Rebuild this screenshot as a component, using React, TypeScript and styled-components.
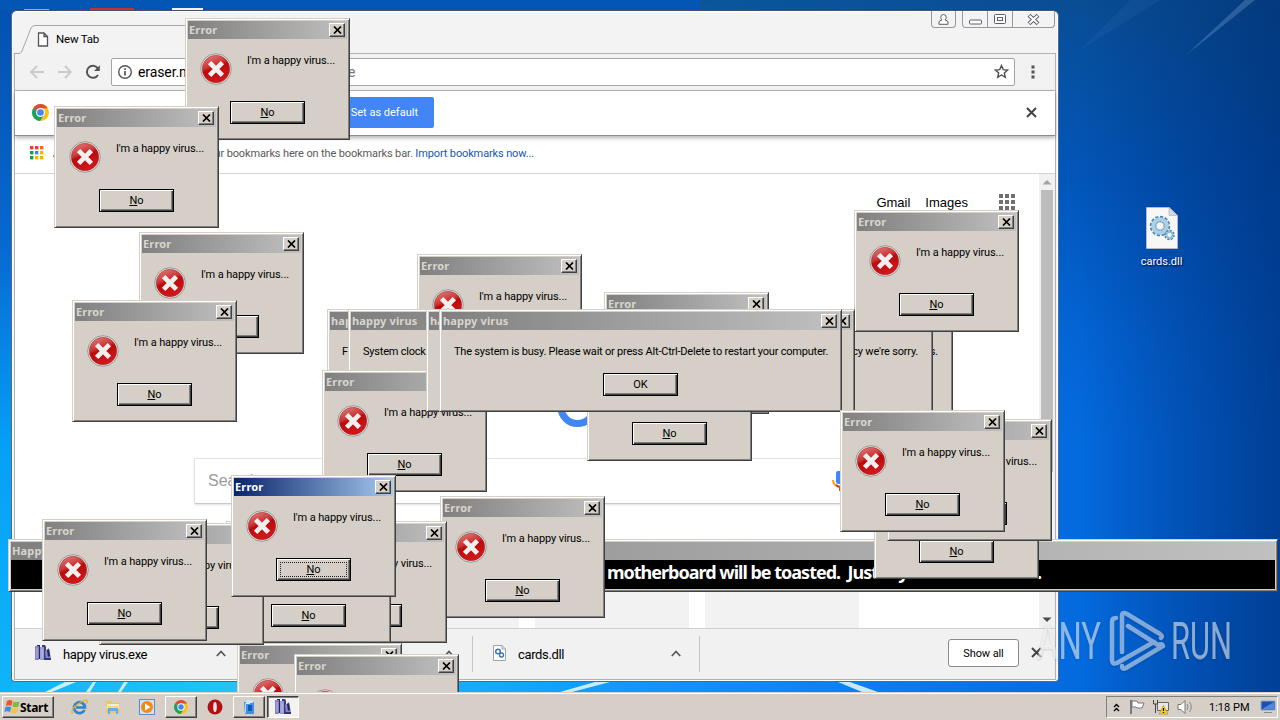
import React from "react";
import styled, { createGlobalStyle, css } from "styled-components";

const ui = `Roboto, "Noto Sans", sans-serif`;
const face = "#d5cfc7";

const Global = createGlobalStyle`
  * { box-sizing: border-box; }
  body { margin: 0; overflow: hidden; font-family: ${ui}; font-size: 11px; color: #000; }
  svg { display: block; flex: none; }
`;

const Desktop = styled.main`
  position: relative;
  width: 1280px;
  height: 720px;
  overflow: hidden;
  display: flex;
  flex-direction: column;
  justify-content: flex-end;
  background:
    linear-gradient(90deg, transparent 1050px, rgba(0, 40, 110, 0) 1080px, rgba(0, 44, 110, 0.55) 1280px),
    linear-gradient(180deg, rgba(10, 70, 130, 0.8) 0, rgba(0, 65, 150, 0.5) 180px, rgba(0, 70, 160, 0.15) 340px, transparent 440px),
    linear-gradient(90deg, #12b4fb 0, #22c6f4 250px, #12a0ff 560px, #0a86f8 800px, #046ce0 1060px, #0058c8 1280px);
`;

const Sky = styled.svg`
  position: absolute;
  left: 0;
  top: 0;
`;

/* ---------- desktop icon ---------- */
const Shortcut = styled.div`
  position: absolute;
  left: 1124px;
  top: 207px;
  width: 75px;
  display: flex;
  flex-direction: column;
  align-items: center;
  gap: 6px;
  color: #fff;
  line-height: 14px;
  text-shadow: 1px 1px 2px #002;
`;

/* ---------- browser ---------- */
const Browser = styled.section`
  position: absolute;
  isolation: isolate;
  left: 11px;
  top: 10px;
  width: 1048px;
  height: 672px;
  padding: 0 2px 1px;
  display: flex;
  flex-direction: column;
  border: 1px solid #4b6a94;
  border-top-color: #45516b;
  border-radius: 6px 6px 4px 4px;
  background: #f3f3f3;
  box-shadow: inset 0 0 0 1px #fff;
`;
const TabStrip = styled.div`
  height: 42px;
  flex: none;
  display: flex;
  justify-content: space-between;
  position: relative;
`;
const TabLabel = styled.div`
  display: flex;
  align-items: center;
  gap: 7px;
  height: 30px;
  margin: 13px 0 0 23px;
  font-size: 11.5px;
  letter-spacing: -0.2px;
  z-index: 1;
`;
const TabShape = styled.svg`
  position: absolute;
  left: 0;
  top: 14px;
`;
const Caption = styled.div`
  display: flex;
  margin-right: 1px;
  height: 17px;
`;
const CapBtn = styled.div<{ $w: number; $first?: boolean; $last?: boolean; $gap?: number }>`
  width: ${(p) => p.$w}px;
  margin-right: ${(p) => p.$gap ?? 0}px;
  display: flex;
  align-items: center;
  justify-content: center;
  border: 1px solid #999;
  border-top: 0;
  border-left-width: ${(p) => (p.$first ? 1 : 0)}px;
  border-radius: 0 0 ${(p) => (p.$last ? 4 : 0)}px ${(p) => (p.$first ? 4 : 0)}px;
`;
const Inner = styled.div`
  flex: 1;
  display: flex;
  flex-direction: column;
  min-height: 0;
  border: 1px solid #b2b2b2;
  border-top: 0;
`;
const Toolbar = styled.div`
  height: 38px;
  flex: none;
  padding: 0 12px 0 14px;
  display: flex;
  align-items: center;
  border-bottom: 1px solid #b4b4b4;
  background: #f2f2f2;
`;
const NavIcons = styled.div`
  display: flex;
  gap: 12px;
  width: 82px;
`;
const Omnibox = styled.div`
  flex: 1;
  height: 28px;
  display: flex;
  align-items: center;
  padding: 0 5px;
  border: 1px solid #a4a4a4;
  border-radius: 2px;
  background: #fff;
  font-size: 14px;
`;
const Url = styled.div`
  width: 210px;
  margin-left: 5px;
  letter-spacing: -0.1px;
`;
const UrlTail = styled.div`
  flex: 1;
  color: #777;
`;
const Dots = styled.svg`
  margin-left: 8px;
`;
const InfoBar = styled.div`
  height: 45px;
  flex: none;
  display: flex;
  align-items: center;
  padding: 0 18px 2px 17px;
  border-bottom: 1px solid #8c8c8c;
  background: #fff;
  box-shadow: 0 2px 4px rgba(0, 0, 0, 0.3);
  z-index: 1;
`;
const DefaultBtn = styled.div`
  width: 140px;
  height: 31px;
  margin-left: 245px;
  margin-right: auto;
  padding-right: 16px;
  display: flex;
  align-items: center;
  justify-content: flex-end;
  border-radius: 2px;
  background: #4285f4;
  color: #fff;
`;
const Bookmarks = styled.div`
  height: 38px;
  flex: none;
  display: flex;
  align-items: center;
  padding: 0 0 3px 15px;
  border-bottom: 1px solid #d4d4d4;
  background: #fff;
  color: #5a5a5a;
  letter-spacing: -0.13px;
  white-space: pre;
`;
const AppsLabel = styled.span`
  color: #111;
  width: 37px;
  margin-left: 9px;
`;
const Import = styled.span`
  color: #1558b0;
`;
const Page = styled.div`
  flex: 1;
  min-height: 0;
  display: flex;
  background: #fff;
`;
const PageBody = styled.div`
  flex: 1;
  display: flex;
  flex-direction: column;
  align-items: center;
  overflow: hidden;
  > * { flex: none; }
`;
const TopLinks = styled.div`
  align-self: stretch;
  display: flex;
  justify-content: flex-end;
  align-items: center;
  gap: 15px;
  height: 56px;
  padding-right: 24px;
  font: 13px "Liberation Sans", Arial, sans-serif;
`;
const AppsGrid = styled.svg`
  margin-left: 16px;
`;
const Doodle = styled.svg`
  margin: 160px 0 0 100px;
`;
const Search = styled.div`
  width: 664px;
  height: 46px;
  margin: 24px 2px 0 0;
  display: flex;
  align-items: center;
  justify-content: space-between;
  padding: 0 9px 0 13px;
  border: 1px solid #e2e2e2;
  border-bottom-color: #c8c8c8;
  border-radius: 2px;
  box-shadow: 0 1px 2px rgba(0, 0, 0, 0.12);
  font: 16px "Liberation Sans", Arial, sans-serif;
  color: #9a9a9a;
`;
const Tiles = styled.div`
  display: flex;
  gap: 16px;
  margin-top: 60px;
`;
const Tile = styled.div`
  width: 154px;
  height: 130px;
  background: #f2f2f2;
`;
const Scroll = styled.div`
  width: 16px;
  display: flex;
  flex-direction: column;
  align-items: center;
  justify-content: space-between;
  background: #f1f1f1;
`;
const Thumb = styled.div`
  width: 12px;
  height: 282px;
  margin: 0 0 auto;
  background: #bcbcbc;
`;
const Shelf = styled.div`
  height: 51px;
  flex: none;
  display: flex;
  align-items: center;
  border-top: 1px solid #cfcfcf;
  background: #f1f1f1;
`;
const Download = styled.div<{ $w: number }>`
  width: ${(p) => p.$w}px;
  height: 36px;
  display: flex;
  align-items: center;
  gap: 12px;
  padding: 0 18px 2px 20px;
  border-right: 1px solid #c6c6c6;
  font-size: 13px;
  letter-spacing: -0.35px;
`;
const FileName = styled.span`
  flex: 1;
  padding-top: 2px;
`;
const ShowAll = styled.div`
  width: 71px;
  height: 28px;
  margin-left: auto;
  margin-right: 12px;
  margin-bottom: 2px;
  display: flex;
  align-items: center;
  justify-content: center;
  border: 1px solid #8b8b8b;
  border-radius: 3px;
  background: #fff;
  letter-spacing: -0.1px;
`;
const ShelfClose = styled.div`
  width: 24px;
  margin-bottom: 3px;
`;

/* ---------- classic windows ---------- */
const raised = css`
  border: 1px solid;
  border-color: ${face} #404040 #404040 ${face};
  box-shadow: inset 1px 1px #fff, inset -1px -1px #808080;
`;
const Frame = styled.section<{ $x: number; $y: number; $w: number; $h: number }>`
  position: absolute;
  left: ${(p) => p.$x}px;
  top: ${(p) => p.$y}px;
  width: ${(p) => p.$w}px;
  height: ${(p) => p.$h}px;
  padding: 2px;
  display: flex;
  flex-direction: column;
  background: ${face};
  ${raised}
`;
const Title = styled.header<{ $active?: boolean }>`
  flex: none;
  height: 18px;
  padding: 0 2px 0 1px;
  display: flex;
  align-items: center;
  justify-content: space-between;
  background: ${(p) => (p.$active ? "linear-gradient(90deg, #0a246a, #a6caf0)" : "linear-gradient(90deg, #808080, #c0c0c0)")};
  color: ${(p) => (p.$active ? "#fff" : "#d9d5ce")};
  font: bold 11px/16px "Noto Sans", sans-serif;
  letter-spacing: 0.15px;
  white-space: nowrap;
`;
const CloseBtn = styled.span`
  width: 16px;
  height: 14px;
  display: flex;
  align-items: center;
  justify-content: center;
  background: ${face};
  border: 1px solid;
  border-color: #fff #404040 #404040 #fff;
  box-shadow: inset -1px -1px #808080;
`;
const Row = styled.div`
  display: flex;
  height: 62px;
  padding: 14px 0 0 12px;
`;
const Message = styled.p`
  margin: 0 0 0 15px;
  padding-top: 1px;
  line-height: 14px;
  letter-spacing: -0.12px;
  white-space: nowrap;
`;
const WideMessage = styled.p`
  display: flex;
  justify-content: space-between;
  margin: 15px 12px 14px;
  line-height: 14px;
  letter-spacing: -0.21px;
  white-space: nowrap;
`;
const PushBtn = styled.span`
  align-self: center;
  width: 75px;
  height: 23px;
  padding: 3px;
  display: flex;
  background: ${face};
  border: 1px solid #000;
  box-shadow: inset 1px 1px #fff, inset -1px -1px #404040, inset -2px -2px #808080;
`;
const PushLabel = styled.span<{ $focus?: boolean }>`
  flex: 1;
  display: flex;
  align-items: center;
  justify-content: center;
  border: 1px dotted ${(p) => (p.$focus ? "#222" : "transparent")};
`;
const Console = styled.div`
  flex: 1;
  padding-left: 596px;
  background: #000;
  color: #fff;
  font: bold 18px/24px "Noto Sans", sans-serif;
  letter-spacing: -1px;
  white-space: pre;
  display: flex;
`;
const ConsoleEnd = styled.span`
  margin-left: auto;
  padding-right: 234px;
`;

/* ---------- taskbar ---------- */
const Taskbar = styled.footer`
  position: relative;
  z-index: 2;
  height: 28px;
  padding: 2px 2px 1px;
  display: flex;
  align-items: center;
  background: ${face};
  border-top: 1px solid ${face};
  box-shadow: inset 0 1px #fff;
`;
const Start = styled.div`
  width: 52px;
  height: 22px;
  padding-left: 1px;
  margin-right: 9px;
  display: flex;
  align-items: center;
  background: ${face};
  border: 1px solid;
  border-color: #fff #404040 #404040 #fff;
  box-shadow: inset -1px -1px #808080;
  font: bold 12px "Noto Sans", sans-serif;
  letter-spacing: -0.3px;
`;
const Task = styled.div<{ $kind?: "up" | "down" }>`
  width: 32px;
  height: 22px;
  margin-right: 2px;
  display: flex;
  align-items: center;
  justify-content: center;
  ${(p) =>
    p.$kind === "up" &&
    css`
      border: 1px solid;
      border-color: #fff #404040 #404040 #fff;
      box-shadow: inset -1px -1px #808080;
    `}
  ${(p) =>
    p.$kind === "down" &&
    css`
      border: 1px solid;
      border-color: #404040 #fff #fff #404040;
      box-shadow: inset 1px 1px #808080;
      background: #f4f2ef;
    `}
`;
const Tray = styled.div`
  width: 172px;
  height: 22px;
  margin-left: auto;
  padding: 0 1px 0 6px;
  display: flex;
  align-items: center;
  border: 1px solid;
  border-color: #808080 #fff #fff #808080;
`;
const Clock = styled.span`
  margin: 0 9px 0 15px;
  width: 42px;
  white-space: nowrap;
`;
const TrayGap = styled.span<{ $w: number }>`
  width: ${(p) => p.$w}px;
`;

const Watermark = styled.svg`
  position: absolute;
  left: 1030px;
  top: 602px;
  filter: drop-shadow(0 1px 1px rgba(0, 0, 0, 0.25));
`;

/* ---------- drawings ---------- */
const Cross = () => (
  <svg width="9" height="8" viewBox="0 0 9 8">
    <path d="M1 .5 L8 7.5 M8 .5 L1 7.5" stroke="#000" strokeWidth="1.7" />
  </svg>
);

const ErrorIcon = () => (
  <svg width="32" height="32" viewBox="0 0 32 32">
    <defs>
      <linearGradient id="red" x1="0" y1="0" x2="0.4" y2="1">
        <stop offset="0" stopColor="#e08a88" />
        <stop offset="0.45" stopColor="#cc3434" />
        <stop offset="0.55" stopColor="#bb0a0c" />
        <stop offset="1" stopColor="#d0181c" />
      </linearGradient>
    </defs>
    <circle cx="16" cy="16" r="15.3" fill="#e9e6e2" stroke="#8f8f8f" strokeWidth="0.9" />
    <circle cx="16" cy="16" r="13.7" fill="url(#red)" stroke="#9c2020" strokeWidth="0.5" />
    <path d="M9.600 9.600 L22.400 22.400 M22.400 9.600 L9.600 22.400" stroke="#f0f0ee" strokeWidth="4.800" />
  </svg>
);

const ChromeLogo = ({ size = 16 }: { size?: number }) => (
  <svg width={size} height={size} viewBox="0 0 16 16">
    <circle cx="8" cy="8" r="8" fill="#fbc116" />
    <path d="M8 8 L1.1 4 A8 8 0 0 1 14.9 4 L8 4 Z" fill="#dd4b3e" />
    <path d="M8 8 L1.1 4 A8 8 0 0 0 7.6 16 L11.4 10 Z" fill="#1aa260" />
    <circle cx="8" cy="8" r="4.2" fill="#fff" />
    <circle cx="8" cy="8" r="3.1" fill="#4285f4" />
  </svg>
);

const Books = () => (
  <svg width="16" height="16" viewBox="0 0 16 16">
    <path d="M0 1h4v14H0z" fill="#8484c4" />
    <path d="M2 0h3v14H4V1H2z" fill="#26265e" />
    <path d="M5 2h4v13H5z" fill="#9c9cd4" />
    <path d="M7 0h3l1 2v12H9V2H7z" fill="#3a3a80" />
    <path d="M10 6l4-3 2 10-5 2z" fill="#8686c8" />
    <path d="M12 5l2-1 1 7-2 1z" fill="#24245a" />
    <path d="M2 3v10M7 4v9" stroke="#c5c5ec" strokeWidth="0.8" />
    <path d="M9 13h7v2H9z" fill="#34346e" />
  </svg>
);

const Gears = ({ w, h }: { w: number; h: number }) => (
  <svg width={w} height={h} viewBox="0 0 32 42">
    <path d="M.5 .5 H23 L31.500 8.500 V41.500 H.5 Z" fill="#f7f7f7" stroke="#b4bac2" />
    <path d="M23 .5 L31.500 8.500 H23 Z" fill="#d3d8de" stroke="#a9afb6" strokeWidth="0.6" />
    <circle cx="14" cy="19" r="7.500" fill="none" stroke="#4b84a8" strokeWidth="5.500" strokeDasharray="2.600 1.300" />
    <circle cx="14" cy="19" r="6.800" fill="none" stroke="#a9d0e6" strokeWidth="4" />
    <circle cx="14" cy="19" r="4.200" fill="#f4f4f4" stroke="#4d7f9f" strokeWidth="0.8" />
    <circle cx="23.500" cy="28" r="3.500" fill="none" stroke="#3d7396" strokeWidth="3.400" strokeDasharray="1.700 1" />
    <circle cx="23.500" cy="28" r="3.100" fill="#f0f6fa" stroke="#90bfd9" strokeWidth="2" />
  </svg>
);

const SmallGears = () => (
  <svg width="13" height="16" viewBox="0 0 13 16">
    <path d="M.5 .5 H9 L12.500 4 V15.500 H.5 Z" fill="#fbfbfb" stroke="#9aa4b0" />
    <path d="M9 .5 V4 H12.500" fill="none" stroke="#9aa4b0" />
    <circle cx="5" cy="6.500" r="2.300" fill="none" stroke="#3f74ad" strokeWidth="1.500" />
    <circle cx="8.500" cy="10" r="2" fill="none" stroke="#3f74ad" strokeWidth="1.300" />
  </svg>
);

const Chevron = () => (
  <svg width="10" height="7" viewBox="0 0 10 7">
    <path d="M.8 6 L5 1.500 L9.200 6" fill="none" stroke="#555" strokeWidth="1.700" />
  </svg>
);

const BigCross = ({ s = 11 }: { s?: number }) => (
  <svg width={s} height={s} viewBox="0 0 11 11">
    <path d="M1 1 L10 10 M10 1 L1 10" stroke="#444" strokeWidth="2" />
  </svg>
);

const Dialog = ({ x, y, active }: { x: number; y: number; active?: boolean }) => (
  <Frame $x={x} $y={y} $w={165} $h={122}>
    <Title $active={active}>
      Error
      <CloseBtn><Cross /></CloseBtn>
    </Title>
    <Row>
      <ErrorIcon />
      <Message>I'm a happy virus...</Message>
    </Row>
    <PushBtn>
      <PushLabel $focus={active}><span><u>N</u>o</span></PushLabel>
    </PushBtn>
  </Frame>
);

const Wide = ({ x, w, left, right }: { x: number; w: number; left?: string; right?: string }) => (
  <Frame $x={x} $y={309} $w={w} $h={103}>
    <Title>
      happy virus
      <CloseBtn><Cross /></CloseBtn>
    </Title>
    <WideMessage>
      <span>{left ?? "\u00a0"}</span>
      <span>{right}</span>
    </WideMessage>
    <PushBtn>
      <PushLabel>OK</PushLabel>
    </PushBtn>
  </Frame>
);

const grid = [0, 1, 2];
const appColors = ["#db4437", "#db4437", "#e8711a", "#0f9d58", "#4285f4", "#f4b400", "#0f9d58", "#f4b400", "#f4b400"];

const Chrome = () => (
  <Browser>
    <TabStrip>
      <TabShape width="1042" height="29" viewBox="0 0 1042 29">
        <path d="M0 28.500 H5 Q7 28.500 8 26 L17 3 Q18.500 .5 21 .5 H320" fill="none" stroke="#a8a8a8" />
        <path d="M320 28.500 H1042" stroke="#b2b2b2" />
      </TabShape>
      <TabLabel>
        <svg width="12" height="15" viewBox="0 0 12 15">
          <path d="M1.500 1 H7 L10.500 4.500 V14 H1.500 Z M7 1 V4.500 H10.500" fill="#fff" stroke="#555" strokeWidth="1.300" />
        </svg>
        New Tab
      </TabLabel>
      <Caption>
        <CapBtn $w={25} $first $last $gap={6}>
          <svg width="11" height="11" viewBox="0 0 11 11">
            <path d="M1 10.300 V8 Q1 6.600 4 6 Q2.800 4.800 2.800 3.200 A2.700 2.700 0 0 1 8.200 3.200 Q8.200 4.800 7 6 Q10 6.600 10 8 V10.300 Z" fill="#fff" stroke="#5d5d6c" />
          </svg>
        </CapBtn>
        <CapBtn $w={26} $first>
          <svg width="13" height="11" viewBox="0 0 13 11">
            <rect x=".5" y="6" width="12" height="4" rx="1" fill="#fff" stroke="#5d5d6c" />
          </svg>
        </CapBtn>
        <CapBtn $w={25}>
          <svg width="12" height="10" viewBox="0 0 12 10">
            <rect x=".5" y=".5" width="11" height="9" rx="1" fill="#fff" stroke="#5d5d6c" />
            <rect x="3.500" y="3.500" width="5" height="3" fill="#fff" stroke="#5d5d6c" />
          </svg>
        </CapBtn>
        <CapBtn $w={42} $last>
          <svg width="13" height="11" viewBox="0 0 13 11">
            <path d="M2 1.300 L11 9.700 M11 1.300 L2 9.700" stroke="#5d5d6c" strokeWidth="4" />
            <path d="M2.500 1.700 L10.500 9.300 M10.500 1.700 L2.500 9.300" stroke="#fff" strokeWidth="2" />
          </svg>
        </CapBtn>
      </Caption>
    </TabStrip>
    <Inner>
      <Toolbar>
        <NavIcons>
          <svg width="16" height="16" viewBox="0 0 16 16"><path d="M15 8 H2.500 M8 2 L2 8 L8 14" fill="none" stroke="#cacaca" strokeWidth="1.800" /></svg>
          <svg width="16" height="16" viewBox="0 0 16 16"><path d="M1 8 H13.500 M8 2 L14 8 L8 14" fill="none" stroke="#cacaca" strokeWidth="1.800" /></svg>
          <svg width="16" height="16" viewBox="0 0 16 16">
            <path d="M13 11 A6 6 0 1 1 12.500 4" fill="none" stroke="#555" strokeWidth="2" />
            <path d="M14.800 1.200 V7 H9 Z" fill="#555" />
          </svg>
        </NavIcons>
        <Omnibox>
          <svg width="16" height="16" viewBox="0 0 16 16">
            <circle cx="8" cy="8" r="6.300" fill="none" stroke="#555" strokeWidth="1.400" />
            <path d="M8 7 V11.500 M8 4.300 V5.900" stroke="#555" strokeWidth="1.700" />
          </svg>
          <Url>eraser.network</Url>
          <UrlTail>e</UrlTail>
          <svg width="15" height="15" viewBox="0 0 24 24">
            <path d="M12 2.500 L14.800 9 L21.800 9.600 L16.500 14.200 L18.100 21.200 L12 17.500 L5.900 21.200 L7.500 14.200 L2.200 9.600 L9.200 9 Z" fill="none" stroke="#4d4d4d" strokeWidth="2.200" />
          </svg>
        </Omnibox>
        <Dots width="20" height="16" viewBox="0 0 20 16">
          <path d="M8.500 1.500h3v3h-3zM8.500 6.500h3v3h-3zM8.500 11.500h3v3h-3z" fill="#555" />
        </Dots>
      </Toolbar>
      <InfoBar>
        <ChromeLogo size={17} />
        <DefaultBtn>Set as default</DefaultBtn>
        <BigCross />
      </InfoBar>
      <Bookmarks>
        <svg width="14" height="14" viewBox="0 0 14 14">
          {appColors.map((c, i) => (
            <rect key={i} x={(i % 3) * 5} y={Math.floor(i / 3) * 5} width="3.400" height="3.400" fill={c} />
          ))}
        </svg>
        <AppsLabel>Apps</AppsLabel>
        For quick access, place your bookmarks here on the bookmarks bar. <Import>Import bookmarks now...</Import>
      </Bookmarks>
      <Page>
        <PageBody>
          <TopLinks>
            <span>Gmail</span>
            <span>Images</span>
            <AppsGrid width="16" height="16" viewBox="0 0 16 16">
              {grid.map((r) => grid.map((c) => <rect key={`${r}${c}`} x={c * 6} y={r * 6} width="4" height="4" fill="#707070" />))}
            </AppsGrid>
          </TopLinks>
          <Doodle width="50" height="44" viewBox="0 0 50 44">
            <path d="M9 17 A16.500 16.500 0 0 0 42 17" fill="none" stroke="#4285f4" strokeWidth="7" />
          </Doodle>
          <Search>
            Search
            <svg width="16" height="24" viewBox="0 0 16 24">
              <rect x="4" y="2" width="7" height="13" rx="2" fill="#4285f4" />
              <path d="M1 11 Q1 17 8 17.500" fill="none" stroke="#f4a01a" strokeWidth="2" />
              <path d="M4 16 Q6 18 8 18 V22" fill="none" stroke="#db4437" strokeWidth="2" />
              <path d="M15 11 Q15 17 8 17.500" fill="none" stroke="#34a853" strokeWidth="2" />
            </svg>
          </Search>
          <Tiles>
            <Tile /><Tile /><Tile /><Tile />
          </Tiles>
        </PageBody>
        <Scroll>
          <svg width="16" height="16" viewBox="0 0 16 16"><path d="M3.500 10.500 L8 6 L12.500 10.500 Z" fill="#a2a2a2" /></svg>
          <Thumb />
          <svg width="16" height="16" viewBox="0 0 16 16"><path d="M3.500 5.500 L8 10 L12.500 5.500 Z" fill="#4d4d4d" /></svg>
        </Scroll>
      </Page>
      <Shelf>
        <Download $w={230}><Books /><FileName>happy virus.exe</FileName><Chevron /></Download>
        <Download $w={228}><Books /><FileName /><Chevron /></Download>
        <Download $w={227}><SmallGears /><FileName>cards.dll</FileName><Chevron /></Download>
        <ShowAll>Show all</ShowAll>
        <ShelfClose><BigCross /></ShelfClose>
      </Shelf>
    </Inner>
  </Browser>
);

export default function App() {
  return (
    <Desktop>
      <Global />
      <Sky width="1280" height="720" viewBox="0 0 1280 720">
        <defs>
          <linearGradient id="edge" x1="0" y1="0" x2="0" y2="1">
            <stop offset="0" stopColor="#0450ae" />
            <stop offset="0.35" stopColor="#0668d0" />
            <stop offset="0.65" stopColor="#06a0f8" />
            <stop offset="1" stopColor="#10b4fa" />
          </linearGradient>
        </defs>
        <rect width="12" height="692" fill="url(#edge)" />
        <rect width="700" height="10" fill="#0456b4" />
        <path d="M1185 56 L1255 0 H1245 Z" fill="#9fc6e8" opacity=".25" />
        <path d="M1080 50 L1160 0 H1130 Z" fill="#9fc6e8" opacity=".06" />
        <path d="M24 9h25v2H24z" fill="#9aa8c8" />
        <path d="M90 8h44v3H90z" fill="#c8302c" />
        <path d="M172 8h31v3h-31z" fill="#eef2f6" />
        <path d="M45 692 L65 682 H76 L52 692Z M86 692 L93 682 H96 L90 692Z M118 692 L124 682 H128 L121 692Z M560 692 L595 682 H610 L572 692Z M862 692 L838 682 H850 L878 692Z" fill="#d8f6ff" opacity=".9" />
      </Sky>
      <Shortcut>
        <Gears w={32} h={42} />
        cards.dll
      </Shortcut>
      <Chrome />

      <Frame $x={8} $y={539} $w={1270} $h={53}>
        <Title>Happy virus</Title>
        <Console>
          motherboard will be toasted.  Just my
          <ConsoleEnd>.</ConsoleEnd>
        </Console>
      </Frame>

      <Dialog x={185} y={18} />
      <Dialog x={54} y={106} />
      <Dialog x={139} y={232} />
      <Dialog x={72} y={300} />
      <Dialog x={417} y={254} />
      <Dialog x={604} y={292} />
      <Dialog x={587} y={339} />
      <Wide x={327} w={626} left="F" right="s." />
      <Wide x={348} w={585} left="System clock" right="cy we're sorry." />
      <Dialog x={854} y={210} />
      <Dialog x={322} y={370} />
      <Wide x={426} w={429} />
      <Wide x={439} w={403} left="The system is busy. Please wait or press Alt-Ctrl-Delete to restart your computer." />
      <Dialog x={874} y={457} />
      <Dialog x={887} y={419} />
      <Dialog x={840} y={410} />
      <Dialog x={237} y={643} />
      <Dialog x={294} y={654} />
      <Dialog x={440} y={496} />
      <Dialog x={282} y={521} />
      <Dialog x={226} y={521} />
      <Dialog x={99} y={523} />
      <Dialog x={42} y={519} />
      <Dialog x={231} y={475} active />

      <Watermark width="210" height="76" viewBox="0 0 210 76">
        <g fill="#fff" opacity=".55" fontFamily="Roboto, sans-serif" fontSize="52">
          <text x="7" y="57" textLength="64" lengthAdjust="spacingAndGlyphs">ANY</text>
          <text x="141" y="57" textLength="61" lengthAdjust="spacingAndGlyphs">RUN</text>
        </g>
        <g fill="none" stroke="#fff" strokeWidth="4.500" strokeLinejoin="round" strokeLinecap="round" opacity=".5">
          <path d="M86 16 Q82 16 82 20 V58 Q82 63 87 61 L124 40" />
          <path d="M92 50 V14 Q92 9 97 12 L130 32 Q133 34 131 36" />
          <path d="M98 24 L128 43 Q132 41 133 44 L96 66 Q92 68 92 64" />
        </g>
      </Watermark>

      <Taskbar>
        <Start>
          <svg width="16" height="16" viewBox="0 0 16 16">
            <path d="M3 2 Q6 0 8.500 2 L7.500 7 Q5 5.500 1.800 7 Z" fill="#e8592a" />
            <path d="M9.500 2.600 Q12 4 15.500 2.500 L14.300 7.500 Q11.500 8.800 8.500 7.500 Z" fill="#7cb93c" />
            <path d="M1.500 8 Q4.500 6.800 7.300 8.200 L6 13 Q3.500 11.500 .3 13 Z" fill="#3f8fd8" />
            <path d="M8.300 8.800 Q11 10 14 8.600 L12.800 13.600 Q10 15 7 13.500 Z" fill="#f5c430" />
          </svg>
          Start
        </Start>
        <Task>
          <svg width="17" height="16" viewBox="0 0 17 16">
            <path d="M13.500 11 A5.500 5.500 0 1 1 14 8.500 H5" fill="none" stroke="#2a86d4" strokeWidth="2.700" />
            <path d="M1.500 14.500 Q-1 11 7 5 Q14 0 16 1.500 Q17 2.500 15 5" fill="none" stroke="#e8b024" strokeWidth="1.300" />
          </svg>
        </Task>
        <Task>
          <svg width="16" height="16" viewBox="0 0 16 16">
            <path d="M1 2h6l1 2h7v10H1z" fill="#e9c765" />
            <path d="M2 5h12v5H2z" fill="#f8efc0" />
            <path d="M1 7h14v3H1z" fill="#f3d985" />
            <path d="M3 9h10v6h-2v-3H5v3H3z" fill="#5fb0e4" />
          </svg>
        </Task>
        <Task>
          <svg width="16" height="16" viewBox="0 0 16 16">
            <rect x=".5" y=".5" width="15" height="15" fill="#cfe2f4" stroke="#4e93cf" />
            <circle cx="8" cy="8" r="6" fill="#f08a1c" />
            <path d="M6 4.500 L11.500 8 L6 11.500 Z" fill="#fff" />
          </svg>
        </Task>
        <Task $kind="up"><ChromeLogo size={14} /></Task>
        <Task>
          <svg width="16" height="16" viewBox="0 0 16 16">
            <circle cx="8" cy="8" r="7.500" fill="#b01116" />
            <ellipse cx="8" cy="8" rx="1.800" ry="5" fill="#f4e4e0" />
          </svg>
        </Task>
        <Task $kind="up">
          <svg width="16" height="16" viewBox="0 0 16 16">
            <path d="M3 3h10v12H4z" fill="#3f8fe4" />
            <path d="M5 1h4v4H5zM9 1h3v3H9z" fill="#cfe4f8" />
            <path d="M7 6h4v6H7z" fill="#1458b4" />
            <path d="M4.500 4v10" stroke="#a8d4fa" />
          </svg>
        </Task>
        <Task $kind="down"><Books /></Task>
        <Tray>
          <svg width="7" height="9" viewBox="0 0 7 9"><path d="M1 4 L3.500 1.500 L6 4 M1 8 L3.500 5.500 L6 8" fill="none" stroke="#000" strokeWidth="1.400" /></svg>
          <TrayGap $w={9} />
          <svg width="16" height="16" viewBox="0 0 16 16">
            <path d="M2 1v14" stroke="#666" strokeWidth="1.600" />
            <path d="M3 2 H8 L9 4 H15 L13 9 H8 L7 8 H3 Z" fill="#fff" stroke="#777" />
          </svg>
          <TrayGap $w={8} />
          <svg width="16" height="16" viewBox="0 0 16 16">
            <path d="M4.500 3.500h11v8h-11z" fill="#e6e6e6" stroke="#666" />
            <path d="M.5 1v4h4v-4M2.500 5v9" fill="none" stroke="#444" />
            <path d="M6 15 L10.500 6.500 L15 15 Z" fill="#f5d21c" stroke="#a88a10" strokeWidth=".6" />
            <path d="M10.500 9v3M10.500 13v1" stroke="#000" strokeWidth="1.200" />
          </svg>
          <TrayGap $w={8} />
          <svg width="17" height="16" viewBox="0 0 17 16">
            <path d="M1 5.500h3l4-4v13l-4-4H1z" fill="#fff" stroke="#777" />
            <path d="M10 5q2 3 0 6M12.500 3q3.500 5 0 10" fill="none" stroke="#888" />
          </svg>
          <Clock>1:18 PM</Clock>
          <svg width="16" height="14" viewBox="0 0 16 14">
            <path d="M1 1h14v9H1z" fill="#1c4fb0" stroke="#8fa8c8" />
            <path d="M2 9 L14 2 V9z" fill="#4f8ad8" />
            <path d="M4 12h8v1H4z" fill="#8a8a8a" />
          </svg>
        </Tray>
      </Taskbar>
    </Desktop>
  );
}
